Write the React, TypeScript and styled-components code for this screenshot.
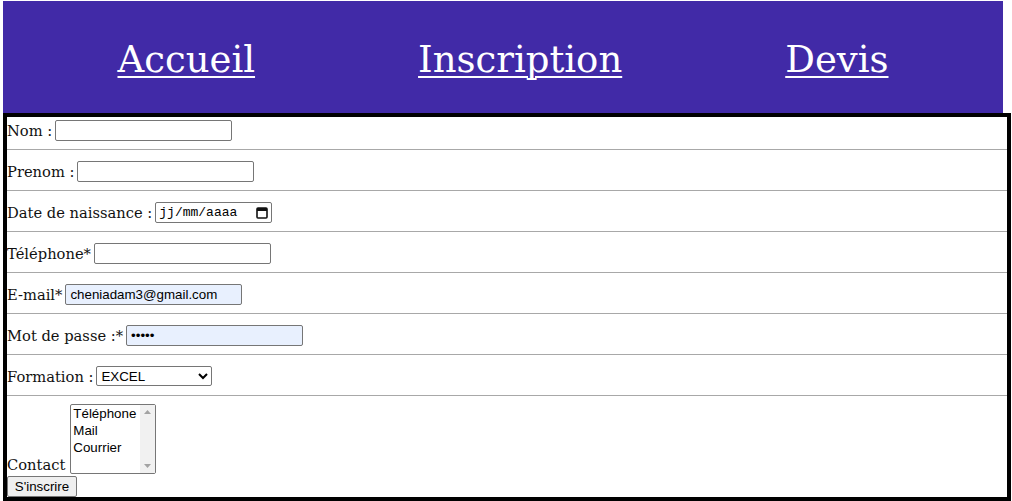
import React from "react";
import styled, { createGlobalStyle } from "styled-components";

const GlobalStyle = createGlobalStyle`
  html, body { margin: 0; padding: 0; background: #ffffff; }
  body { font-family: "DejaVu Serif", "Liberation Serif", serif; }
`;

const Page = styled.div`
  padding: 1px 0 0 3px;
  width: 1008px;
`;

const Header = styled.header`
  box-sizing: border-box;
  width: 1000px;
  height: 112px;
  padding-top: 5px;
  background: #412aa7;
  display: flex;
  justify-content: center;
  align-items: center;
  gap: 163px;
`;

const NavLink = styled.a`
  color: #ffffff;
  font-family: "DejaVu Serif", serif;
  font-size: 37px;
  text-decoration: underline;
  text-underline-offset: 4px;
  text-decoration-thickness: 2px;
  line-height: 1;
`;

const Form = styled.form`
  box-sizing: border-box;
  width: 1008px;
  border: 4px solid #000000;
  background: #ffffff;
`;

const Row = styled.div`
  display: flex;
  align-items: flex-end;
  gap: 3px;
  height: 24px;
`;

const Divider = styled.hr`
  margin: 8px 0;
  border: 0;
  height: 1px;
  background: #a8a8a8;
`;

const Label = styled.label`
  font-family: "DejaVu Serif", serif;
  font-size: 14.7px;
  line-height: 21px;
  color: #111111;
  white-space: nowrap;
`;

const TextInput = styled.input<{ $filled?: boolean }>`
  box-sizing: border-box;
  width: 177px;
  height: 21px;
  margin: 0;
  padding: 1px 4px;
  border: 1px solid #767676;
  border-radius: 2px;
  background: ${(p) => (p.$filled ? "#e8f0fe" : "#ffffff")};
  font-family: "Liberation Sans", Arial, sans-serif;
  font-size: 13.33px;
  color: #000000;
  outline: none;
`;

const DateBox = styled.span`
  box-sizing: border-box;
  width: 117px;
  height: 21px;
  border: 1px solid #767676;
  border-radius: 2px;
  display: flex;
  align-items: center;
  justify-content: space-between;
  padding: 0 3px 0 3px;
  font-family: "Liberation Mono", monospace;
  font-size: 13px;
  color: #000000;
`;

const Select = styled.select`
  box-sizing: border-box;
  width: 116px;
  height: 20px;
  margin: 0 0 1px 0;
  font-family: "Liberation Sans", Arial, sans-serif;
  font-size: 13.33px;
  color: #000000;
  border: 1px solid #767676;
  border-radius: 2px;
  background: #ffffff;
`;

const ContactRow = styled.div`
  display: flex;
  align-items: flex-end;
  gap: 5px;
  height: 70px;
`;

const ContactLabel = styled(Label)`
  line-height: 18px;
`;

const Listbox = styled.div`
  box-sizing: border-box;
  width: 86px;
  height: 70px;
  border: 1px solid #767676;
  border-radius: 2px;
  display: flex;
  background: #ffffff;
`;

const Options = styled.div`
  flex: 1;
  padding: 0 0 0 2px;
  font-family: "Liberation Sans", Arial, sans-serif;
  font-size: 13.33px;
  line-height: 17px;
  color: #000000;
`;

const Option = styled.div`
  white-space: nowrap;
`;

const Scrollbar = styled.div`
  width: 15px;
  background: #f1f1f1;
  display: flex;
  flex-direction: column;
  justify-content: space-between;
  align-items: center;
  padding: 5px 0;
`;

const ButtonRow = styled.div`
  margin-top: 2px;
  display: flex;
`;

const Button = styled.button`
  box-sizing: border-box;
  height: 21px;
  width: 70px;
  margin: 0;
  padding: 0 6px;
  border: 1px solid #767676;
  border-radius: 2px;
  background: #efefef;
  font-family: "Liberation Sans", Arial, sans-serif;
  font-size: 13.33px;
  color: #000000;
`;

const CalendarIcon = () => (
  <svg width="12" height="13" viewBox="0 0 12 13">
    <rect x="1" y="2" width="10" height="10" rx="1" fill="none" stroke="#111" strokeWidth="1.6" />
    <rect x="1" y="2" width="10" height="3" fill="#111" />
  </svg>
);

const Arrow = ({ up }: { up?: boolean }) => (
  <svg width="7" height="4" viewBox="0 0 7 4">
    <polygon points={up ? "0,4 3.5,0 7,4" : "0,0 3.5,4 7,0"} fill="#a3a3a3" />
  </svg>
);

export default function App() {
  return (
    <>
      <GlobalStyle />
      <Page>
        <Header>
          <NavLink href="#">Accueil</NavLink>
          <NavLink href="#">Inscription</NavLink>
          <NavLink href="#">Devis</NavLink>
        </Header>
        <Form onSubmit={(e) => e.preventDefault()}>
          <Row>
            <Label htmlFor="nom">Nom :</Label>
            <TextInput id="nom" type="text" />
          </Row>
          <Divider />
          <Row>
            <Label htmlFor="prenom">Prenom :</Label>
            <TextInput id="prenom" type="text" />
          </Row>
          <Divider />
          <Row>
            <Label>Date de naissance :</Label>
            <DateBox>
              <span>jj/mm/aaaa</span>
              <CalendarIcon />
            </DateBox>
          </Row>
          <Divider />
          <Row>
            <Label htmlFor="tel">Téléphone*</Label>
            <TextInput id="tel" type="tel" />
          </Row>
          <Divider />
          <Row>
            <Label htmlFor="mail">E-mail*</Label>
            <TextInput id="mail" type="email" $filled defaultValue="cheniadam3@gmail.com" />
          </Row>
          <Divider />
          <Row>
            <Label htmlFor="mdp">Mot de passe :*</Label>
            <TextInput id="mdp" type="password" $filled defaultValue="12345" />
          </Row>
          <Divider />
          <Row>
            <Label htmlFor="formation">Formation :</Label>
            <Select id="formation" defaultValue="EXCEL">
              <option value="EXCEL">EXCEL</option>
              <option value="WORD">WORD</option>
            </Select>
          </Row>
          <Divider />
          <ContactRow>
            <ContactLabel>Contact</ContactLabel>
            <Listbox role="listbox">
              <Options>
                <Option>Téléphone</Option>
                <Option>Mail</Option>
                <Option>Courrier</Option>
              </Options>
              <Scrollbar>
                <Arrow up />
                <Arrow />
              </Scrollbar>
            </Listbox>
          </ContactRow>
          <ButtonRow>
            <Button type="submit">S'inscrire</Button>
          </ButtonRow>
        </Form>
      </Page>
    </>
  );
}
